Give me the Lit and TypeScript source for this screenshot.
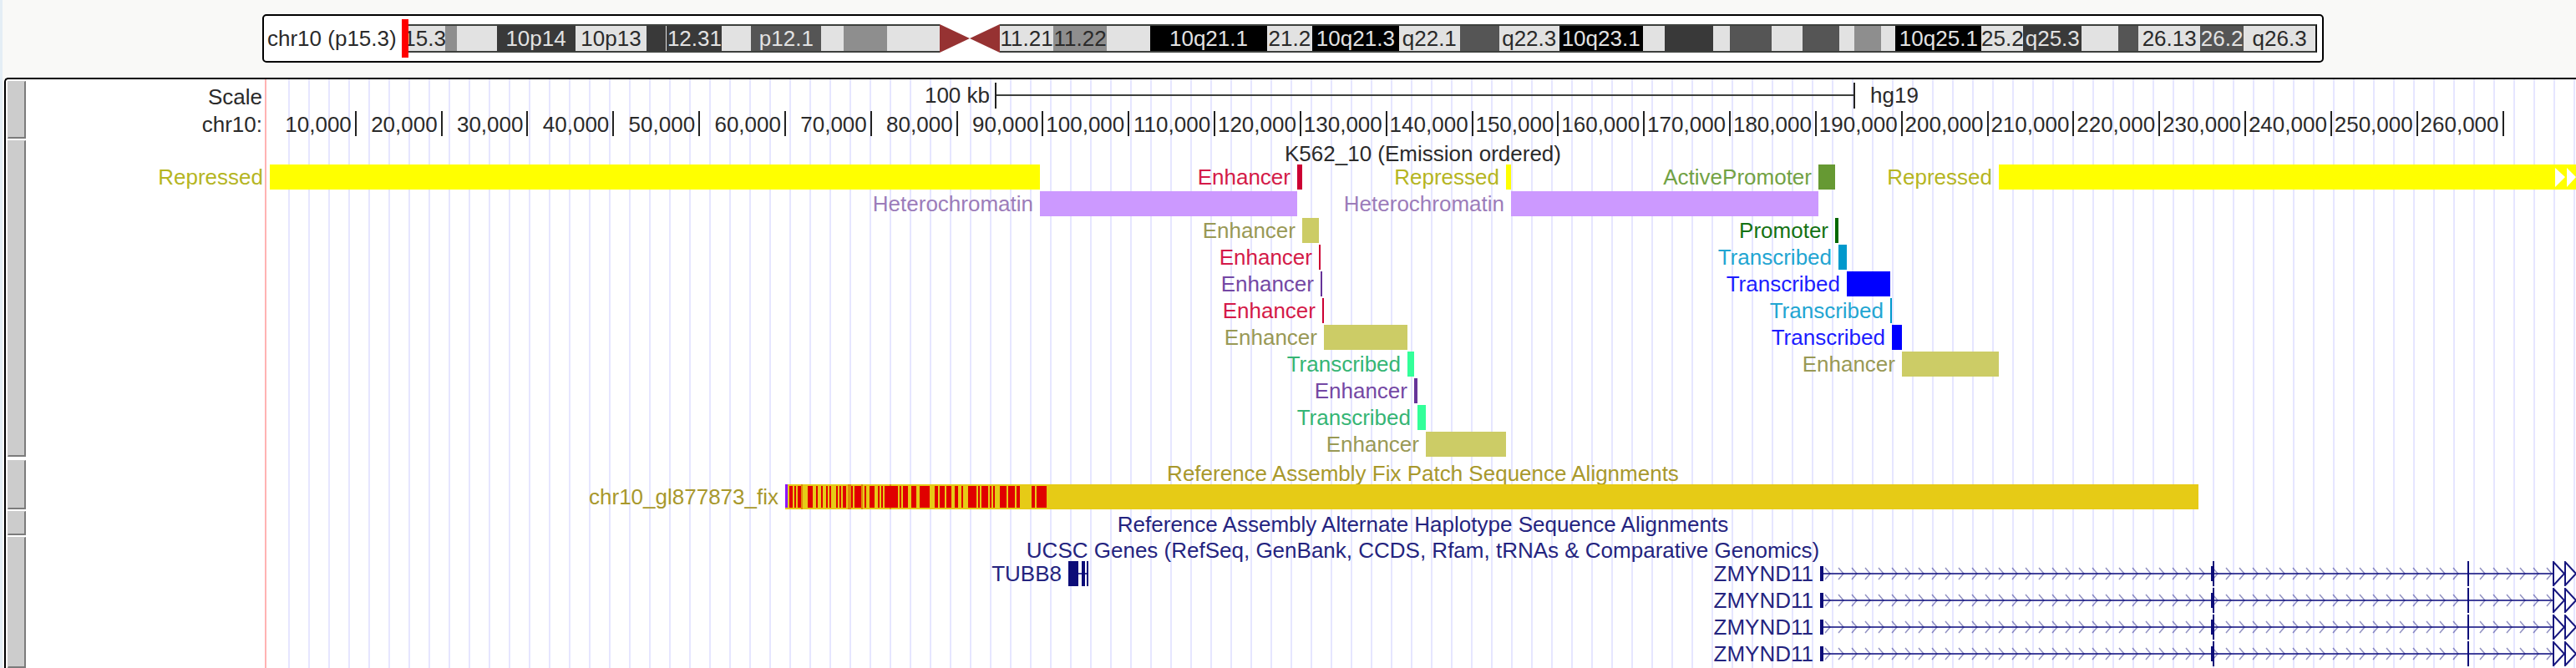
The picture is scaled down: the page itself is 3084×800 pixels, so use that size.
import { LitElement, html, svg, css, nothing } from "lit";
import { customElement, property } from "lit/decorators.js";
import { styleMap } from "lit/directives/style-map.js";

/** Number of drawing units across the visible window of the chromosome. */
const SPAN = 2761;

const pct = (value: number, whole: number) => `${(value / whole) * 100}%`;

type Band = [width: number, shade: string, name?: string];

const SHORT_ARM: Band[] = [
  [48, "light", "15.3"],
  [14, "grey"],
  [48, "light"],
  [94, "dark", "10p14"],
  [86, "light", "10p13"],
  [23, "dark"],
  [1, "light"],
  [66, "dark", "12.31"],
  [35, "light"],
  [84, "mid", "p12.1"],
  [27, "light"],
  [52, "grey"],
  [63, "light"],
];

const LONG_ARM: Band[] = [
  [64, "light", "11.21"],
  [64, "grey", "11.22"],
  [52, "light"],
  [140, "black", "10q21.1"],
  [54, "light", "21.2"],
  [104, "black", "10q21.3"],
  [73, "light", "q22.1"],
  [47, "mid"],
  [72, "light", "q22.3"],
  [100, "black", "10q23.1"],
  [26, "light"],
  [58, "dark"],
  [20, "light"],
  [50, "mid"],
  [38, "light"],
  [44, "mid"],
  [18, "light"],
  [32, "grey"],
  [17, "light"],
  [103, "black", "10q25.1"],
  [50, "light", "25.2"],
  [70, "dark", "q25.3"],
  [44, "light"],
  [24, "mid"],
  [74, "light", "26.13"],
  [52, "mid", "26.2"],
  [86, "light", "q26.3"],
];

type Feature = { name: string; kind: string; start: number; size: number; more?: boolean };

const f = (name: string, kind: string, start: number, size: number, more = false): Feature => ({
  name,
  kind,
  start,
  size,
  more,
});

const CHROMATIN: Feature[][] = [
  [
    f("Repressed", "repressed", 0, 922),
    f("Enhancer", "strong", 1230, 6),
    f("Repressed", "repressed", 1480, 6),
    f("ActivePromoter", "active", 1854, 20),
    f("Repressed", "repressed", 2070, 691, true),
  ],
  [f("Heterochromatin", "hetero", 922, 308), f("Heterochromatin", "hetero", 1486, 368)],
  [f("Enhancer", "weak", 1236, 20), f("Promoter", "promoter", 1874, 4)],
  [f("Enhancer", "strong", 1256, 2), f("Transcribed", "cyan", 1878, 10)],
  [f("Enhancer", "purple", 1258, 2), f("Transcribed", "blue", 1888, 52)],
  [f("Enhancer", "strong", 1260, 2), f("Transcribed", "cyan", 1940, 2)],
  [f("Enhancer", "weak", 1262, 100), f("Transcribed", "blue", 1942, 12)],
  [f("Transcribed", "green", 1362, 8), f("Enhancer", "weak", 1954, 116)],
  [f("Enhancer", "purple", 1370, 4)],
  [f("Transcribed", "green", 1374, 10)],
  [f("Enhancer", "weak", 1384, 96)],
];

/** Mismatching stretches of the fix patch: offset and length. */
const MISMATCHES: [number, number][] = [
  [5, 4], [11, 2], [15, 4], [27, 6], [37, 2], [43, 2], [49, 2], [53, 2], [61, 2], [65, 2],
  [69, 4], [79, 2], [83, 8], [95, 2], [101, 6], [111, 2], [115, 2], [119, 16], [137, 2],
  [141, 6], [151, 6], [161, 12], [179, 4], [185, 6], [193, 6], [203, 4], [211, 2], [219, 10],
  [231, 2], [235, 8], [245, 2], [249, 2], [257, 8], [267, 8], [277, 4], [295, 4], [301, 12],
];

const FAINT_MISMATCHES: [number, number][] = [
  [19, 2], [75, 4], [91, 2], [125, 2],
];

@customElement("chromosome-ideogram")
class ChromosomeIdeogram extends LitElement {
  static styles = css`
    :host {
      display: flex;
      flex: 1;
      align-items: center;
      box-sizing: border-box;
      min-width: 0;
      height: 58px;
      padding: 0 6px 0 4px;
      gap: 10px;
      border: 2px solid #000;
      border-radius: 5px;
      background: #fff;
      color: #2a2a2a;
      white-space: nowrap;
    }
    .bands {
      position: relative;
      display: flex;
      flex: 1;
      min-width: 0;
      height: 34px;
    }
    .band {
      display: flex;
      flex-basis: 0;
      min-width: 0;
      box-sizing: border-box;
      align-items: center;
      justify-content: center;
      border-block: 2px solid #3d403d;
      line-height: 30px;
    }
    .band:last-of-type {
      border-right: 2px solid #111;
    }
    .light { background: #e2e2e2; }
    .grey { background: #8e8e8e; }
    .mid { background: #555; color: #e2e2e2; }
    .dark { background: #393939; color: #e2e2e2; }
    .black { background: #000; color: #e2e2e2; }
    .centromere {
      flex: 72 0 0;
      min-width: 0;
      height: 34px;
      fill: #963232;
    }
    .marker {
      position: absolute;
      left: -4px;
      top: -6px;
      width: 8px;
      height: 46px;
      background: #f00;
    }
  `;

  private arm(bands: Band[]) {
    return bands.map(
      ([width, shade, name]) =>
        html`<div class="band ${shade}" style=${styleMap({ flexGrow: String(width) })}>
          ${name ?? nothing}
        </div>`
    );
  }

  render() {
    return html`
      <span>chr10 (p15.3)</span>
      <div class="bands">
        ${this.arm(SHORT_ARM)}
        <svg class="centromere" viewBox="0 0 72 34" preserveAspectRatio="none">
          <path d="M0 0 L36 17 L0 34 Z M72 0 L36 17 L72 34 Z" />
        </svg>
        ${this.arm(LONG_ARM)}
        <span class="marker"></span>
      </div>
    `;
  }
}

@customElement("track-row")
class TrackRow extends LitElement {
  @property() name = "";

  static styles = css`
    :host {
      display: grid;
      grid-template-columns: 22px 292px minmax(0, 1fr);
    }
    .handle {
      padding: 0;
      border: solid #ccc;
      border-width: 1px 2px 2px 1px;
      border-right-color: #7b7b7b;
      border-bottom-color: #7b7b7b;
      background: #ccc;
      cursor: ns-resize;
    }
    .side {
      padding: 3px 9px 0 0;
      text-align: right;
      line-height: 33px;
    }
    .plot {
      display: flex;
      flex-direction: column;
      gap: 2px;
      min-width: 0;
    }
  `;

  render() {
    return html`
      <button class="handle" type="button" aria-label=${this.name}></button>
      <div class="side"><slot name="side"></slot></div>
      <div class="plot"><slot></slot></div>
    `;
  }
}

@customElement("app-root")
class AppRoot extends LitElement {
  static styles = css`
    :host {
      display: flex;
      flex-direction: column;
      box-sizing: border-box;
      min-height: 100vh;
      overflow: hidden;
      padding-left: 2px;
      border-left: 3px solid #e4eef5;
      background: #f9f9f7;
      color: #2a2a2a;
      font: 26px/30px "Liberation Sans", Arial, sans-serif;
      white-space: nowrap;
    }
    header {
      display: flex;
      padding: 17px 302px 18px 309px;
    }
    main {
      display: flex;
      flex: 1;
      flex-direction: column;
      gap: 2px;
      padding: 2px 0 0 2px;
      border: solid #000;
      border-width: 2px 0 0 2px;
      border-top-left-radius: 5px;
      background:
        linear-gradient(#ffb3b3, #ffb3b3) 310px 0 / 2px 100% no-repeat,
        repeating-linear-gradient(90deg, #e6e6ff 0 2px, transparent 2px 24px) 338px 0 no-repeat,
        #fff;
    }
    .fill {
      flex: 1;
    }
    .padded {
      padding-bottom: 2px;
    }
    .title {
      height: 29px;
      margin-bottom: -2px;
      text-align: center;
      line-height: 32px;
    }
    .title.alone {
      margin: 0;
    }
    .row {
      display: grid;
      height: 30px;
    }
    .feature {
      grid-area: 1 / 1;
      display: flex;
      justify-content: flex-end;
      gap: 8px;
    }
    .bar {
      flex: none;
      height: 30px;
      background: var(--bar);
    }
    .name {
      flex: none;
      color: var(--name, var(--bar));
    }
    .bar svg {
      display: block;
      width: 100%;
      height: 30px;
    }
    .bar .more {
      width: 28px;
      margin-left: auto;
      fill: #fff;
    }
    .repressed { --bar: #ff0; --name: #b5b522; }
    .strong { --bar: #cc0033; --name: #d41a48; }
    .weak { --bar: #cccc66; --name: #999955; }
    .hetero { --bar: #cc99ff; --name: #9c7cba; }
    .active { --bar: #669933; --name: #72a244; }
    .promoter { --bar: #006600; --name: #147214; }
    .cyan { --bar: #0099cc; --name: #22a5d2; }
    .blue { --bar: #0000ff; --name: #1c1cff; }
    .purple { --bar: #663399; --name: #7448a4; }
    .green { --bar: #33ff99; --name: #35b575; }
    .patch { --bar: #e6cb16; --name: #a8982c; }
    .patch-title { color: #a8982c; }
    .gene { --bar: transparent; --name: #24247f; }
    .gene-title { color: #24247f; }

    .scale {
      display: flex;
      gap: 6px;
      height: 32px;
      padding-top: 2px;
    }
    .scale .amount {
      display: flex;
      flex: none;
      justify-content: flex-end;
    }
    .scale .line {
      flex: none;
      box-sizing: border-box;
      height: 31px;
      border-inline: 2px solid #222;
      background: linear-gradient(#3d403d, #3d403d) 0 14px / 100% 2px no-repeat;
    }
    .scale .build {
      padding-left: 12px;
    }
    .ruler {
      display: flex;
      height: 33px;
      padding-left: 1px;
    }
    .tick {
      flex: none;
      box-sizing: border-box;
      height: 30px;
      padding-right: 4px;
      border-right: 2px solid #222;
      text-align: right;
      line-height: 32px;
    }
  `;

  private feature(item: Feature, drawing: unknown = nothing) {
    const end = item.start + item.size;
    return html`
      <div class="feature ${item.kind}" style=${styleMap({ width: pct(end, SPAN) })}>
        <span class="name">${item.name}</span>
        <div class="bar" style=${styleMap({ width: pct(item.size, end) })}>
          ${item.more
            ? html`<svg class="more" viewBox="0 0 28 30">
                <path d="M3 4 L15 15 L3 27 Z M17 4 L28 15 L17 27 Z" />
              </svg>`
            : drawing}
        </div>
      </div>
    `;
  }

  private patchDrawing() {
    return html`<svg viewBox="0 0 1692 30" preserveAspectRatio="none" shape-rendering="crispEdges">
      ${FAINT_MISMATCHES.map(
        ([x, w]) => svg`<rect x=${x} y="0" width=${w} height="30" fill="#df8a08" />`
      )}
      ${MISMATCHES.map(
        ([x, w]) => svg`<rect x=${x} y="2" width=${w} height="26" fill="#e00000" />`
      )}
      <rect x="0" y="0" width="3" height="28" fill="#8c14ff" />
    </svg>`;
  }

  private shortGene() {
    return html`<svg viewBox="0 0 24 30" preserveAspectRatio="none" fill="#0c0c78">
      <path d="M0 0h12v30h-12z M16 0h4v30h-4z M22 0h2v30h-2z" />
      <path d="M12 14h12v2h-12z" opacity="0.8" />
    </svg>`;
  }

  private longGene() {
    const tips: number[] = [];
    for (let x = 12; x < 880; x += 16) {
      if (Math.abs(x - 776) > 6) tips.push(x);
    }
    return html`<svg viewBox="0 0 905 30" preserveAspectRatio="none">
      <path d="M4 15H877" stroke="#43439b" stroke-width="2" />
      <path
        d=${tips.map((x) => `M${x - 6} 8L${x} 15L${x - 6} 22`).join("")}
        fill="none"
        stroke="#0c0c78"
        stroke-opacity="0.45"
        stroke-width="1.5"
      />
      <path
        d="M0 6h4v18h-4z M468 6h3v18h-3z M470 0h2v30h-2z M775 0h2v30h-2z"
        fill="#0c0c78"
      />
      <path
        d="M878 1V29L891 15Z M892 1V29L905 15Z"
        fill="#fff"
        stroke="#16167e"
        stroke-width="2"
      />
    </svg>`;
  }

  render() {
    const ticks = Array.from({ length: 26 }, (_, i) => (i + 1) * 10000);
    return html`
      <header><chromosome-ideogram></chromosome-ideogram></header>
      <main>
        <track-row name="Base position">
          <div slot="side">Scale</div>
          <div slot="side">chr10:</div>
          <div class="scale">
            <span class="amount" style=${styleMap({ width: pct(862, SPAN) })}>100 kb</span>
            <span class="line" style=${styleMap({ width: pct(1030, SPAN) })}></span>
            <span class="build">hg19</span>
          </div>
          <div class="ruler">
            ${ticks.map(
              (at) =>
                html`<span class="tick" style=${styleMap({ width: pct(102.87, SPAN) })}
                  >${at.toLocaleString("en-US")}</span
                >`
            )}
          </div>
        </track-row>

        <track-row class="padded" name="K562 chromatin state">
          <div class="title">K562_10 (Emission ordered)</div>
          ${CHROMATIN.map(
            (row) => html`<div class="row">${row.map((item) => this.feature(item))}</div>`
          )}
        </track-row>

        <track-row name="Fix patches">
          <div class="title patch-title">Reference Assembly Fix Patch Sequence Alignments</div>
          <div class="row">
            ${this.feature(f("chr10_gl877873_fix", "patch", 617, 1692), this.patchDrawing())}
          </div>
        </track-row>

        <track-row name="Alternate haplotypes">
          <div class="title alone gene-title">
            Reference Assembly Alternate Haplotype Sequence Alignments
          </div>
        </track-row>

        <track-row class="fill" name="UCSC Genes">
          <div class="title gene-title">
            UCSC Genes (RefSeq, GenBank, CCDS, Rfam, tRNAs &amp; Comparative Genomics)
          </div>
          <div class="row">
            ${this.feature(f("TUBB8", "gene", 956, 24), this.shortGene())}
            ${this.feature(f("ZMYND11", "gene", 1856, 905), this.longGene())}
          </div>
          ${[1, 2, 3].map(
            () => html`<div class="row">
              ${this.feature(f("ZMYND11", "gene", 1856, 905), this.longGene())}
            </div>`
          )}
        </track-row>
      </main>
    `;
  }
}
